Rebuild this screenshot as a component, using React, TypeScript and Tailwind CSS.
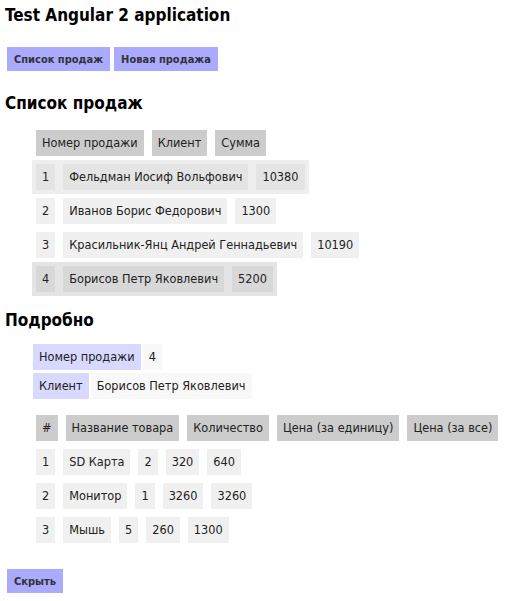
import React from 'react';

const sales = [
  { id: 1, client: 'Фельдман Иосиф Вольфович', sum: 10380 },
  { id: 2, client: 'Иванов Борис Федорович', sum: 1300 },
  { id: 3, client: 'Красильник-Янц Андрей Геннадьевич', sum: 10190 },
  { id: 4, client: 'Борисов Петр Яковлевич', sum: 5200 },
];

const goods = [
  { id: 1, name: 'SD Карта', count: 2, price: 320, total: 640 },
  { id: 2, name: 'Монитор', count: 1, price: 3260, total: 3260 },
  { id: 3, name: 'Мышь', count: 5, price: 260, total: 1300 },
];

const hoverId = 1;
const selectedId = 4;

function Cell({ children, tone }: { children: React.ReactNode; tone: string }) {
  return <div className={`h-[26px] px-[6px] flex items-center whitespace-nowrap ${tone}`}>{children}</div>;
}

function Button({ children }: { children: React.ReactNode }) {
  return (
    <button className="h-[24px] px-[7px] bg-[#aaaaff] text-[#333] text-[11px] font-bold leading-none">
      {children}
    </button>
  );
}

export default function App() {
  return (
    <div className="min-h-[601px] bg-white text-[#222] font-['DejaVu_Sans_Condensed','DejaVu_Sans',sans-serif] text-[12.6px] pl-[5px]">
      <h1 className="pt-[5px] text-[17px] leading-[20px] font-bold text-black">Test Angular 2 application</h1>

      <div className="flex gap-[4px] mt-[22px] ml-[2px]">
        <Button>Список продаж</Button>
        <Button>Новая продажа</Button>
      </div>

      <h3 className="mt-[22px] text-[17px] leading-[20px] font-bold text-black">Список продаж</h3>

      <div className="ml-[27px] mt-[13px]">
        <div className="flex gap-2 p-1 w-fit">
          <Cell tone="bg-[#cccccc]">Номер продажи</Cell>
          <Cell tone="bg-[#cccccc]">Клиент</Cell>
          <Cell tone="bg-[#cccccc]">Сумма</Cell>
        </div>
        {sales.map((s) => {
          const row = s.id === selectedId ? 'bg-[#e4e4e4]' : s.id === hoverId ? 'bg-[#eeeeee]' : '';
          const cell = s.id === selectedId ? 'bg-[#d8d8d8]' : s.id === hoverId ? 'bg-[#e4e4e4]' : 'bg-[#f0f0f0]';
          return (
            <div key={s.id} className={`flex gap-2 p-1 w-fit ${row}`}>
              <Cell tone={cell}>{s.id}</Cell>
              <Cell tone={cell}>{s.client}</Cell>
              <Cell tone={cell}>{s.sum}</Cell>
            </div>
          );
        })}
      </div>

      <h3 className="mt-[14px] text-[17px] leading-[20px] font-bold text-black">Подробно</h3>

      <div className="ml-[28px] mt-[14px] flex flex-col gap-[3px]">
        <div className="flex gap-[2px]">
          <Cell tone="bg-[#d9d9ff]">Номер продажи</Cell>
          <Cell tone="bg-[#f8f8f8]">4</Cell>
        </div>
        <div className="flex gap-[2px]">
          <Cell tone="bg-[#d9d9ff]">Клиент</Cell>
          <Cell tone="bg-[#f8f8f8]">Борисов Петр Яковлевич</Cell>
        </div>
      </div>

      <div className="ml-[27px] mt-[12px]">
        <div className="flex gap-2 p-1 w-fit">
          <Cell tone="bg-[#cccccc]">#</Cell>
          <Cell tone="bg-[#cccccc]">Название товара</Cell>
          <Cell tone="bg-[#cccccc]">Количество</Cell>
          <Cell tone="bg-[#cccccc]">Цена (за единицу)</Cell>
          <Cell tone="bg-[#cccccc]">Цена (за все)</Cell>
        </div>
        {goods.map((g) => (
          <div key={g.id} className="flex gap-2 p-1 w-fit">
            <Cell tone="bg-[#f0f0f0]">{g.id}</Cell>
            <Cell tone="bg-[#f0f0f0]">{g.name}</Cell>
            <Cell tone="bg-[#f0f0f0]">{g.count}</Cell>
            <Cell tone="bg-[#f0f0f0]">{g.price}</Cell>
            <Cell tone="bg-[#f0f0f0]">{g.total}</Cell>
          </div>
        ))}
      </div>

      <div className="mt-[22px] ml-[2px]">
        <Button>Скрыть</Button>
      </div>
    </div>
  );
}
